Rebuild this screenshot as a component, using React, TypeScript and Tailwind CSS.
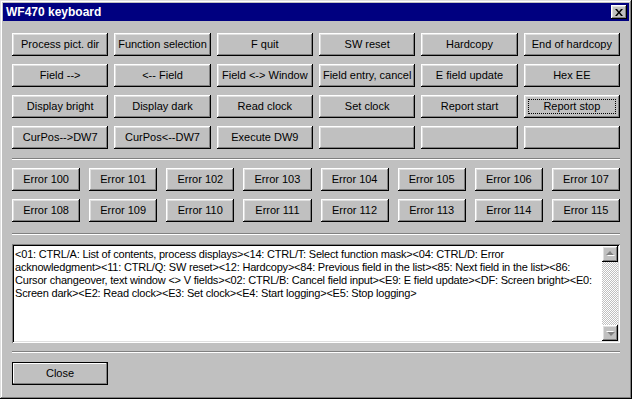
const raised =
  'shadow-[inset_-1px_-1px_0_#000,inset_1px_1px_0_#fff,inset_-2px_-2px_0_#808080,inset_2px_2px_0_#dfdfdf]';

const keys = [
  'Process pict. dir',
  'Function selection',
  'F quit',
  'SW reset',
  'Hardcopy',
  'End of hardcopy',
  'Field -->',
  '<-- Field',
  'Field <-> Window',
  'Field entry, cancel',
  'E field update',
  'Hex EE',
  'Display bright',
  'Display dark',
  'Read clock',
  'Set clock',
  'Report start',
  'Report stop',
  'CurPos-->DW7',
  'CurPos<--DW7',
  'Execute DW9',
  '',
  '',
  '',
];

const errors = Array.from({ length: 16 }, (_, i) => `Error ${100 + i}`);

const helpLines = [
  '<01: CTRL/A: List of contents, process displays><14: CTRL/T: Select function mask><04: CTRL/D: Error',
  'acknowledgment><11: CTRL/Q: SW reset><12: Hardcopy><84: Previous field in the list><85: Next field in the list><86:',
  'Cursor changeover, text window <> V fields><02: CTRL/B: Cancel field input><E9: E field update><DF: Screen bright><E0:',
  'Screen dark><E2: Read clock><E3: Set clock><E4: Start logging><E5: Stop logging>',
];

function Button({ label, focused }: { label: string; focused?: boolean }) {
  return (
    <button
      className={`relative h-[23px] bg-[#c0c0c0] ${raised} flex items-center justify-center text-[11px] text-black whitespace-nowrap`}
    >
      {label}
      {focused && <span className="absolute inset-[4px] border border-dotted border-black" />}
    </button>
  );
}

function Separator({ className = '' }: { className?: string }) {
  return <div className={`h-[2px] border-t border-t-[#808080] border-b border-b-white ${className}`} />;
}

function ArrowButton({ down }: { down?: boolean }) {
  return (
    <div className={`w-[16px] h-[16px] shrink-0 bg-[#c0c0c0] ${raised} flex items-center justify-center`}>
      <svg width="9" height="6" viewBox="0 0 9 6" className={down ? 'rotate-180' : ''}>
        <path d="M5 1 L9 5 L1 5 Z" fill="#fff" />
        <path d="M4 0 L8 4 L0 4 Z" fill="#808080" />
      </svg>
    </div>
  );
}

export default function App() {
  return (
    <div
      className="w-[632px] h-[399px] bg-[#c0c0c0] p-[3px] flex flex-col shadow-[inset_-1px_-1px_0_#000,inset_1px_1px_0_#dfdfdf,inset_-2px_-2px_0_#808080,inset_2px_2px_0_#fff]"
      style={{ fontFamily: '"Liberation Sans", Arial, sans-serif' }}
    >
      {/* title bar */}
      <div className="h-[18px] bg-[#000080] flex items-center justify-between pl-[3px] pr-[2px]">
        <span className="text-white font-bold text-[12px] leading-none">WF470 keyboard</span>
        <div className={`w-[16px] h-[14px] bg-[#c0c0c0] ${raised} flex items-center justify-center`}>
          <svg width="8" height="7" viewBox="0 0 8 7">
            <path d="M0 0h2l2 2.5L6 0h2L5 3.5 8 7H6L4 4.5 2 7H0l3-3.5z" fill="#000" />
          </svg>
        </div>
      </div>

      <div className="flex flex-col px-[9px] pt-[12px]">
        <div className="grid grid-cols-6 gap-x-[6px] gap-y-[8px]">
          {keys.map((k, i) => (
            <Button key={i} label={k} focused={k === 'Report stop'} />
          ))}
        </div>

        <Separator className="mt-[9px]" />

        <div className="grid grid-cols-8 gap-x-[9px] gap-y-[8px] mt-[8px]">
          {errors.map((e) => (
            <Button key={e} label={e} />
          ))}
        </div>

        <Separator className="mt-[11px]" />

        <div className="mt-[9px] h-[99px] p-[2px] bg-white flex shadow-[inset_1px_1px_0_#808080,inset_-1px_-1px_0_#fff,inset_2px_2px_0_#000,inset_-2px_-2px_0_#dfdfdf]">
          <div className="flex-1 overflow-hidden pl-[1px] pt-[2px] text-[11px] leading-[13px] tracking-[-0.2px] text-black">
            {helpLines.map((l, i) => (
              <div key={i} className="whitespace-nowrap">
                {l}
              </div>
            ))}
          </div>
          <div className="w-[16px] flex flex-col">
            <ArrowButton />
            <div className="flex-1 bg-[image:repeating-conic-gradient(#c0c0c0_0%_25%,#fff_0%_50%)] bg-[length:2px_2px]" />
            <ArrowButton down />
          </div>
        </div>

        <Separator className="mt-[8px]" />

        <div className="mt-[9px]">
          <div className="w-[96px] h-[23px] border border-black">
            <div
              className={`w-full h-full bg-[#c0c0c0] shadow-[inset_-1px_-1px_0_#808080,inset_1px_1px_0_#fff] flex items-center justify-center text-[11px] text-black`}
            >
              Close
            </div>
          </div>
        </div>
      </div>
    </div>
  );
}
